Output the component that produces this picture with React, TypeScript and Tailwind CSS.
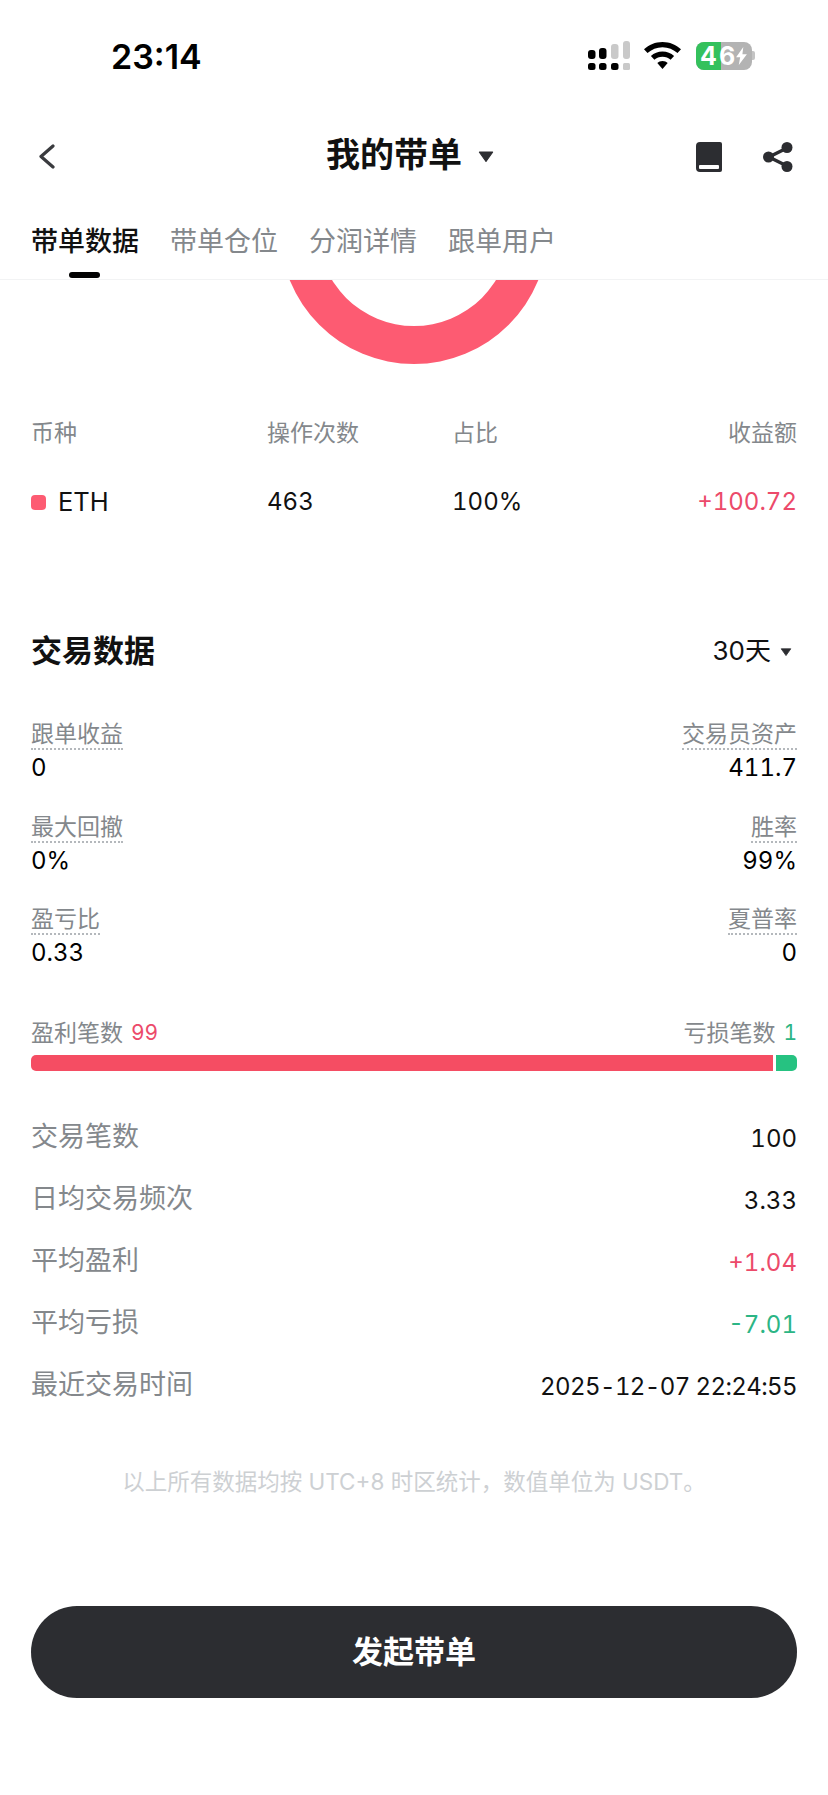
const Under = ({ children }: { children: React.ReactNode }) => (
  <span className="inline-block border-b-2 border-dotted border-[#b4b8bc] text-[23px] leading-[27px] text-[#84888c]">{children}</span>
);

const Metric = ({ l, r, lv, rv }: { l: string; r: string; lv: string; rv: string }) => (
  <div className="flex h-[92.5px] justify-between">
    <div className="flex flex-col items-start">
      <Under>{l}</Under>
      <span className="mt-[2px] text-[24px] leading-[32px] text-black tabular-nums">{lv}</span>
    </div>
    <div className="flex flex-col items-end">
      <Under>{r}</Under>
      <span className="mt-[2px] text-[24px] leading-[32px] text-black tabular-nums">{rv}</span>
    </div>
  </div>
);

const Row = ({ l, v, c }: { l: string; v: string; c: string }) => (
  <div className="flex h-[62px] items-center justify-between">
    <span className="text-[27px] text-[#84888c]">{l}</span>
    <span className={`mt-[4px] text-[24px] tabular-nums ${c}`}>{v}</span>
  </div>
);

const Caret = ({ className }: { className: string }) => (
  <svg viewBox="0 0 14 10" className={className}>
    <path d="M1 1h12L7 9.5z" fill="#2c2d31" stroke="#2c2d31" strokeLinejoin="round" />
  </svg>
);

export default function App() {
  return (
    <div className="flex h-[1795px] w-[828px] flex-col overflow-hidden bg-white font-[Inter,'Noto_Sans_CJK_SC',sans-serif]">
      {/* status bar */}
      <div className="flex h-[112px] shrink-0 items-start pl-[111px] pr-[73px] pt-[38px]">
        <span className="text-[34px] font-semibold leading-[38px] text-black">23:14</span>
        <div className="ml-auto mt-[3px] flex items-start">
          <svg viewBox="0 0 42 29" className="h-[29px] w-[42px]">
            <g fill="#000">
              <rect x="0" y="9" width="7.5" height="9" rx="3" />
              <rect x="11" y="7" width="7.5" height="11" rx="3" />
              <rect x="0" y="22" width="7.5" height="7" rx="2.5" />
              <rect x="11" y="22" width="7.5" height="7" rx="2.5" />
              <rect x="23" y="22" width="7.5" height="7" rx="2.5" />
            </g>
            <g fill="#c9c9c9">
              <rect x="23" y="3" width="7.5" height="15" rx="3" />
              <rect x="35" y="0" width="7" height="18" rx="3" />
              <rect x="35" y="22" width="7" height="7" rx="1.5" />
            </g>
          </svg>
          <svg viewBox="0 0 37 27" className="ml-[14px] mt-[1px] h-[27px] w-[37px]">
            <path d="M18.5 0C11.3 0 5 2.8 0 7.3l3.5 3.8C7.6 7.4 12.8 5.2 18.5 5.2s10.9 2.2 15 5.9L37 7.3C32 2.8 25.700 0 18.500 0z" fill="#000" />
            <path d="M18.500 9.500c-4.500 0-8.500 1.700-11.600 4.500l3.500 3.800c2.100-1.900 4.900-3.100 8.100-3.100s6 1.200 8.100 3.100l3.500-3.800c-3.100-2.800-7.100-4.500-11.600-4.500z" fill="#000" />
            <path d="M18.500 19c-2.100 0-3.900.8-5.200 2l5.200 6 5.200-6c-1.300-1.200-3.100-2-5.200-2z" fill="#000" />
          </svg>
          <div className="relative ml-[15px] mt-[1px] flex h-[28px] w-[56px] rounded-[8px] bg-[#b3b3b3]">
            <div className="h-full w-[25px] rounded-l-[8px] bg-[#34c15c]" />
            <span className="absolute left-[4px] top-[-1px] flex h-[30px] items-center text-[25px] font-bold leading-[30px] tracking-[2px] text-white">46</span>
            <svg viewBox="0 0 12 20" className="absolute left-[39px] top-[5px] h-[18px] w-[13px]">
              <path d="M8 0L0 11.500h4.500L3 20l9-12H7z" fill="#fff" />
            </svg>
          </div>
          <div className="mt-[10px] h-[9px] w-[3px] rounded-r-[2px] bg-[#c4c4c4]" />
        </div>
      </div>

      {/* nav bar */}
      <div className="relative flex h-[86px] shrink-0 items-center justify-center pr-[8px]">
        <svg viewBox="0 0 17 25" className="absolute left-[38px] top-[32px] h-[25px] w-[17px]" fill="none">
          <path d="M15 2L3 12.500 15 23" stroke="#3a3b3f" strokeWidth="3.200" strokeLinecap="round" strokeLinejoin="round" />
        </svg>
        <span className="text-[34px] font-bold leading-[44px] text-[#111]">我的带单</span>
        <Caret className="ml-[16px] mt-[3px] h-[11px] w-[16px]" />
        <svg viewBox="0 0 26 30" className="absolute left-[696px] top-[30px] h-[30px] w-[26px]">
          <path d="M4 0h20a2 2 0 0 1 2 2v26a2 2 0 0 1-2 2H4a4 4 0 0 1-4-4V4a4 4 0 0 1 4-4z" fill="#2c2d31" />
          <rect x="3" y="23" width="20" height="4" rx="1" fill="#fff" />
        </svg>
        <svg viewBox="0 0 30 30" className="absolute left-[763px] top-[30px] h-[30px] w-[30px]">
          <path d="M24 6L6 15l18 9" fill="none" stroke="#2c2d31" strokeWidth="3.500" />
          <circle cx="24" cy="5.500" r="5.500" fill="#2c2d31" />
          <circle cx="5.500" cy="15" r="5.500" fill="#2c2d31" />
          <circle cx="24" cy="24.500" r="5.500" fill="#2c2d31" />
        </svg>
      </div>

      {/* tabs */}
      <div className="flex h-[82px] shrink-0 items-start gap-[31px] border-b border-[#f2f3f4] px-[31px] pt-[24px]">
        <div className="relative flex flex-col items-center">
          <span className="text-[27px] font-medium leading-[40px] text-[#111]">带单数据</span>
          <div className="absolute left-[38px] top-[50px] h-[6px] w-[31px] rounded-[3px] bg-black" />
        </div>
        <span className="text-[27px] leading-[40px] text-[#84888c]">带单仓位</span>
        <span className="text-[27px] leading-[40px] text-[#84888c]">分润详情</span>
        <span className="text-[27px] leading-[40px] text-[#84888c]">跟单用户</span>
      </div>

      {/* donut remainder */}
      <div className="flex h-[84px] shrink-0 justify-center overflow-hidden">
        <svg viewBox="0 0 268 134" className="mt-[-50px] h-[134px] w-[268px] shrink-0">
          <path d="M0 0A134 134 0 0 0 268 0H230A96 96 0 0 1 38 0z" fill="#fd5b72" />
        </svg>
      </div>

      <div className="flex flex-1 flex-col px-[31px]">
        {/* coin table */}
        <div className="mt-[51px] flex text-[23px] leading-[36px] text-[#84888c]">
          <span className="w-[236px]">币种</span>
          <span className="w-[185px]">操作次数</span>
          <span>占比</span>
          <span className="ml-auto">收益额</span>
        </div>
        <div className="mt-[33px] flex items-center text-[24px] leading-[36px] text-[#111] tabular-nums">
          <div className="flex w-[236px] items-center">
            <div className="h-[15px] w-[15px] rounded-[4px] bg-[#fd5b72]" />
            <span className="ml-[12px] text-[25.5px]">ETH</span>
          </div>
          <span className="w-[185px]">463</span>
          <span>100%</span>
          <span className="ml-auto text-[#ec4a6a]">+100.72</span>
        </div>

        {/* trade data */}
        <div className="mt-[109px] flex items-center justify-between">
          <span className="text-[31px] font-bold leading-[44px] text-[#111]">交易数据</span>
          <div className="flex items-center pr-[5px]">
            <span className="text-[26px] leading-[36px] text-[#111]">30天</span>
            <Caret className="ml-[9px] mt-[2px] h-[8px] w-[12px]" />
          </div>
        </div>

        <div className="mt-[48px] flex flex-col">
          <Metric l="跟单收益" r="交易员资产" lv="0" rv="411.7" />
          <Metric l="最大回撤" r="胜率" lv="0%" rv="99%" />
          <Metric l="盈亏比" r="夏普率" lv="0.33" rv="0" />
        </div>

        <div className="mt-[19.5px] flex items-center justify-between text-[23px] leading-[30px]">
          <div className="flex items-center gap-[8px]">
            <span className="text-[#84888c]">盈利笔数</span>
            <span className="text-[21px] tabular-nums text-[#ec4a6a]">99</span>
          </div>
          <div className="flex items-center gap-[8px]">
            <span className="text-[#84888c]">亏损笔数</span>
            <span className="text-[21px] tabular-nums text-[#2cb585]">1</span>
          </div>
        </div>
        <div className="mt-[7px] flex h-[16px] gap-[3px]">
          <div className="flex-1 rounded-l-[5px] bg-[#f54d63]" />
          <div className="w-[21px] rounded-r-[5px] bg-[#26c281]" />
        </div>

        <div className="mt-[35px] flex flex-col">
          <Row l="交易笔数" v="100" c="text-[#111]" />
          <Row l="日均交易频次" v="3.33" c="text-[#111]" />
          <Row l="平均盈利" v="+1.04" c="text-[#ec4a6a]" />
          <Row l="平均亏损" v="-7.01" c="text-[#2cb585]" />
          <Row l="最近交易时间" v="2025-12-07 22:24:55" c="text-[#111] tracking-[-0.6px]" />
        </div>

        <div className="mt-[50px] text-center text-[22.5px] leading-[32px] text-[#cdd0d3]">
          以上所有数据均按 UTC+8 时区统计，数值单位为 USDT。
        </div>

        <button className="mt-[108px] h-[92px] w-full rounded-full bg-[#2c2d31] text-[31px] font-bold text-white">
          发起带单
        </button>
      </div>
    </div>
  );
}
